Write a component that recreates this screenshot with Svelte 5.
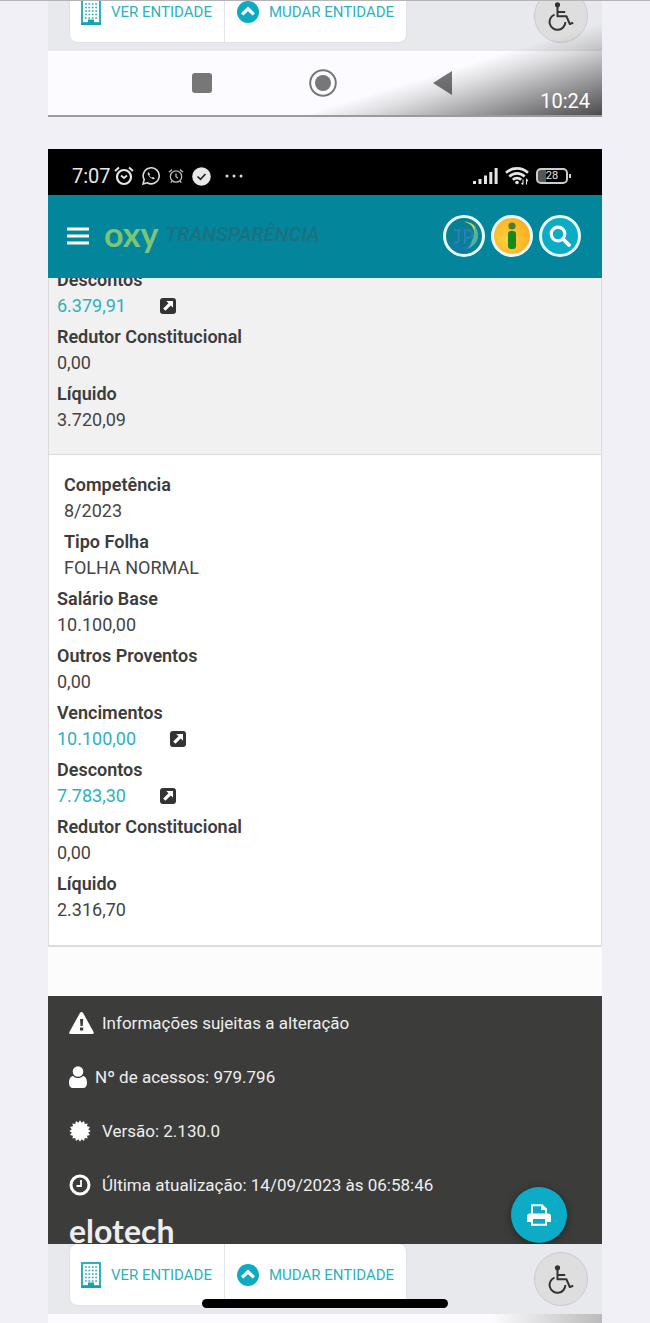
<script lang="ts">
  type Field = {
    label: string;
    value: string;
    link?: boolean;
    indent?: boolean;
  };

  const previous: Field[] = [
    { label: "Descontos", value: "6.379,91", link: true },
    { label: "Redutor Constitucional", value: "0,00" },
    { label: "Líquido", value: "3.720,09" },
  ];

  const current: Field[] = [
    { label: "Competência", value: "8/2023", indent: true },
    { label: "Tipo Folha", value: "FOLHA NORMAL", indent: true },
    { label: "Salário Base", value: "10.100,00" },
    { label: "Outros Proventos", value: "0,00" },
    { label: "Vencimentos", value: "10.100,00", link: true },
    { label: "Descontos", value: "7.783,30", link: true },
    { label: "Redutor Constitucional", value: "0,00" },
    { label: "Líquido", value: "2.316,70" },
  ];

  // jagged edge of the version badge
  const badge = Array.from({ length: 32 }, (_, i) => {
    const r = i % 2 ? 8.4 : 10.8;
    const a = (i * Math.PI) / 16;
    return `${(11 + r * Math.cos(a)).toFixed(1)},${(11 + r * Math.sin(a)).toFixed(1)}`;
  }).join(" ");
</script>

{#snippet fieldList(fields: Field[])}
  <dl class="fields">
    {#each fields as field}
      <div class="field" class:indent={field.indent}>
        <dt>{field.label}</dt>
        <dd>
          {#if field.link}
            <a href="#detalhe">
              {field.value}
              <svg width="16" height="16" viewBox="0 0 16 16" aria-hidden="true">
                <rect width="16" height="16" rx="3" fill="#333" />
                <path d="M6.2 3h6.8v6.8l-2.2-2.2-5.4 5.2-2.2-2.2 5.3-5.3z" fill="#fff" />
              </svg>
            </a>
          {:else}
            {field.value}
          {/if}
        </dd>
      </div>
    {/each}
  </dl>
{/snippet}

{#snippet entityBar()}
  <div class="entity-bar">
    <nav class="entity-links">
      <a class="see" href="#entidade">
        <svg width="20" height="26" viewBox="0 0 20 26" aria-hidden="true">
          <rect x="1" y="1" width="18" height="23" fill="none" stroke="#2fb0bd" stroke-width="2" />
          <path d="M4 5h13M4 8.5h13M4 12h13M4 15.5h13M4 19h13" stroke="#2fb0bd" stroke-width="1.7" stroke-dasharray="1.8 1.6" />
          <path d="M7 20.5h6V25H7zM0 24h20v2H0z" fill="#14a3b3" />
        </svg>
        VER ENTIDADE
      </a>
      <a class="change" href="#mudar">
        <svg width="22" height="22" viewBox="0 0 22 22" aria-hidden="true">
          <circle cx="11" cy="11" r="11" fill="#0cabc2" />
          <path d="M5.2 13.4L11 7.8l5.8 5.6" fill="none" stroke="#fff" stroke-width="3.4" />
        </svg>
        MUDAR ENTIDADE
      </a>
    </nav>
    <button class="access" type="button" aria-label="Acessibilidade">
      <svg width="28" height="29" viewBox="0 0 28 29" fill="none" stroke="#333" stroke-width="2" aria-hidden="true">
        <circle cx="10.5" cy="2.8" r="2.6" fill="#333" stroke="none" />
        <path d="M10.5 4v10.3h9l3.3 7.7 3.4-1.2M10.7 10h7.5" stroke-linejoin="round" />
        <path d="M7.5 12.6a7.9 7.9 0 1 0 10.9 7.5" />
      </svg>
    </button>
  </div>
{/snippet}

<main class="page">
  <section class="shot shot-top">
    {@render entityBar()}
    <div class="android-nav">
      <svg width="22" height="22" viewBox="0 0 22 22"><rect x="1" y="1" width="20" height="20" rx="3" fill="#777" /></svg>
      <svg width="28" height="28" viewBox="0 0 28 28">
        <circle cx="14" cy="14" r="12.8" fill="none" stroke="#777" stroke-width="2" />
        <circle cx="14" cy="14" r="8" fill="#777" />
      </svg>
      <svg width="20" height="24" viewBox="0 0 20 24"><path d="M19 0v24L0 12z" fill="#777" /></svg>
    </div>
    <div class="shade"><time>10:24</time></div>
  </section>

  <section class="shot shot-main">
    <div class="status-bar">
      <time>7:07</time>
      <svg width="20" height="20" viewBox="0 0 20 20" fill="none" stroke="#e6e6e6" aria-hidden="true">
        <circle cx="10" cy="11" r="7" stroke-width="2.2" />
        <path d="M1 5l4-3.5M19 5l-4-3.5" stroke-width="2" />
        <path d="M7 9.5l3 2.5 3-2.5" stroke-width="1.8" />
      </svg>
      <svg width="18" height="18" viewBox="0 0 18 18" fill="none" stroke="#ddd" aria-hidden="true">
        <path d="M1 17l1.2-4.3A8 8 0 1 1 5.3 15.8z" stroke-width="1.6" />
        <path d="M6.3 5c-1.2 1-.6 3 1.4 5s4 2.9 5.2 1.5L11 9.8l-1.1.9c-1.2-.5-2-1.3-2.6-2.5l.8-1z" fill="#ddd" stroke="none" />
      </svg>
      <svg width="16" height="16" viewBox="0 0 16 16" fill="none" stroke="#bbb" aria-hidden="true">
        <circle cx="8" cy="8.5" r="5.7" stroke-width="1.3" />
        <path d="M1 4.2L4 1.5M15 4.2L12 1.5M8 5.5v3.2l2 1.6M4 13l-1.3 1.7M12 13l1.3 1.7" stroke-width="1.3" />
      </svg>
      <svg width="19" height="19" viewBox="0 0 19 19" aria-hidden="true">
        <circle cx="9.5" cy="9.5" r="9.3" fill="#e8e8e8" />
        <path d="M5.5 9.5l3 2.8 5-5.3" fill="none" stroke="#222" stroke-width="1.7" />
      </svg>
      <svg class="dots" width="18" height="4" viewBox="0 0 18 4" fill="#ddd" aria-hidden="true">
        <circle cx="2" cy="2" r="1.5" /><circle cx="9" cy="2" r="1.5" /><circle cx="16" cy="2" r="1.5" />
      </svg>
      <div class="signals">
        <svg width="25" height="16" viewBox="0 0 25 16" fill="#e6e6e6" aria-hidden="true">
          <path d="M0 13h3v3H0zM5.5 11h3v5h-3zM11 7.5h3V16h-3zM16.3 4h3v12h-3zM21.6 0h3v16h-3z" />
        </svg>
        <svg width="24" height="18" viewBox="0 0 24 18" fill="none" stroke="#e6e6e6" stroke-width="2.6" aria-hidden="true">
          <path d="M1 5.8a16 16 0 0 1 22 0M4.3 9.5a11 11 0 0 1 15.4 0M7.8 12.8a6 6 0 0 1 8.4 0" />
          <circle cx="12" cy="15.5" r="1.8" fill="#e6e6e6" stroke="none" />
          <path d="M18 12.5v5M16.5 16l1.5 1.5M21.5 17.5v-5l1.4 1.5" stroke-width="1.1" />
        </svg>
        <div class="battery">28</div>
      </div>
    </div>

    <header class="app-header">
      <button class="menu" type="button" aria-label="Menu">
        <svg width="22" height="18" viewBox="0 0 22 18"><path d="M0 2h22M0 9h22M0 16h22" stroke="#fff" stroke-width="3" /></svg>
      </button>
      <a class="brand" href="#inicio"><b>oxy</b><i>TRANSPARÊNCIA</i></a>
      <div class="tools">
        <button class="round portal" type="button" aria-label="Portal">
          <svg width="36" height="36" viewBox="0 0 38 38" fill="none">
            <path d="M19 4c9 2 13 9 10 19 7-8 3-19-10-19z" fill="#c7d64b" />
            <path d="M30 8c8 10 3 22-9 25 6-6 10-14 9-25z" fill="#4fb3a0" />
            <path d="M6 23c3 8 13 10 21 3-4 10-18 12-21-3z" fill="#1577b8" />
            <path d="M8 13h8M13.5 13v10q0 4-5 3M20 27V13h3q5 0 5 4t-5 4h-3" stroke="#2a7fbd" stroke-width="2" />
          </svg>
        </button>
        <button class="round info" type="button" aria-label="Informação">
          <svg width="14" height="28" viewBox="0 0 14 28" fill="#128a1c">
            <circle cx="7" cy="4" r="3.6" fill="#487d35" />
            <rect x="3" y="9" width="8" height="18" rx="3" />
          </svg>
        </button>
        <button class="round search" type="button" aria-label="Pesquisar">
          <svg width="22" height="22" viewBox="0 0 22 22" fill="none" stroke="#fff">
            <circle cx="9" cy="9" r="6.8" stroke-width="3.2" />
            <path d="M14 14l6 6" stroke-width="3.8" stroke-linecap="round" />
          </svg>
        </button>
      </div>
    </header>

    <article class="record previous">{@render fieldList(previous)}</article>
    <article class="record current">{@render fieldList(current)}</article>

    <footer class="footer">
      <p>
        <svg width="25" height="22" viewBox="0 0 25 22" aria-hidden="true">
          <path d="M12.5 0q1 0 1.6 1l10.5 19q.7 2-1.2 2H1.6q-1.9 0-1.2-2L10.9 1q.6-1 1.6-1z" fill="#fff" />
          <path d="M11 7h3.2l-.5 7h-2.2zM11 15.5h3.2v3H11z" fill="#3c3c3b" />
        </svg>
        <span>Informações sujeitas a alteração</span>
      </p>
      <p>
        <svg width="18" height="22" viewBox="0 0 18 22" fill="#fff" aria-hidden="true">
          <path d="M4 10c1.5 1.5 3 2 5 2s3.5-.5 5-2c3 .7 4 3.5 4 7 0 3-1.5 5-4 5H4c-2.5 0-4-2-4-5 0-3.5 1-6.3 4-7z" />
          <circle cx="9" cy="5.5" r="5.3" />
        </svg>
        <span>Nº de acessos: 979.796</span>
      </p>
      <p class="wide">
        <svg width="22" height="22" viewBox="0 0 22 22" aria-hidden="true"><polygon points={badge} fill="#fff" /></svg>
        <span>Versão: 2.130.0</span>
      </p>
      <p class="wide">
        <svg width="22" height="22" viewBox="0 0 22 22" fill="none" stroke="#fff" aria-hidden="true">
          <circle cx="11" cy="11" r="9" stroke-width="3" />
          <path d="M12 6v6H7.5" stroke-width="1.8" />
        </svg>
        <span>Última atualização: 14/09/2023 às 06:58:46</span>
      </p>
      <div class="vendor">elotech</div>
      <button class="print" type="button" aria-label="Imprimir">
        <svg width="24" height="22" viewBox="0 0 24 22" aria-hidden="true">
          <path d="M5 11V1.2h10l4 4V11" fill="none" stroke="#fff" stroke-width="2" />
          <path d="M14 1v5h5z" fill="#fff" />
          <path d="M3 9.5h18q3 0 3 3V18h-4v-3H4v3H0v-5.5q0-3 3-3z" fill="#fff" />
          <path d="M5 15v5.8h14V15" fill="none" stroke="#fff" stroke-width="2" />
        </svg>
      </button>
    </footer>

    {@render entityBar()}
    <div class="nav-edge"></div>
  </section>
  <div class="home-indicator"></div>
</main>

<style>
  :global(body) {
    margin: 0;
    background: #f1f0f6;
  }

  .page {
    display: flex;
    flex-direction: column;
    gap: 32px;
    min-height: 100vh;
    padding: 0 48px;
    box-sizing: border-box;
    font-family: Roboto, "Liberation Sans", sans-serif;
    font-size: 18px;
    color: #444;
    border-top: 1px solid #b4b3b8;
  }

  svg {
    display: block;
    flex-shrink: 0;
  }

  button {
    display: flex;
    align-items: center;
    justify-content: center;
    padding: 0;
    border: none;
    background: none;
    cursor: pointer;
  }

  a {
    color: #2fb0bd;
    text-decoration: none;
  }

  .shot {
    position: relative;
    display: flex;
    flex-direction: column;
    overflow: hidden;
  }

  .shot-top {
    border-bottom: 2px solid #9b9b9d;
  }

  .shot-top .entity-bar {
    margin-top: -20px;
  }

  .shot-main {
    flex: 1;
  }

  .entity-bar {
    display: flex;
    align-items: flex-start;
    justify-content: space-between;
    height: 70px;
    padding: 0 14px 0 22px;
    box-sizing: border-box;
    background: #e8e9ec;
    flex-shrink: 0;
  }

  .entity-links {
    display: flex;
    height: 61px;
    border-radius: 7px;
    background: #fff;
    box-shadow: 0 0 2px #ccc;
  }

  .entity-links a {
    display: flex;
    align-items: center;
    gap: 10px;
    padding: 0 12px 0 11px;
    font-size: 15px;
    white-space: nowrap;
  }

  .entity-links .change {
    padding: 0 12px;
    border-left: 1px solid #e2e3e7;
  }

  .access {
    width: 54px;
    height: 54px;
    margin-top: 8px;
    border: 1px solid #ccc;
    border-radius: 50%;
    background: #dedede;
  }

  .android-nav {
    display: flex;
    align-items: center;
    justify-content: center;
    gap: 96px;
    height: 64px;
    padding-right: 7px;
    background: #fcfbff;
  }

  .shade {
    position: absolute;
    right: 0;
    bottom: 0;
    width: 300px;
    height: 100px;
    display: flex;
    align-items: flex-end;
    justify-content: flex-end;
    padding: 0 12px 4px 0;
    box-sizing: border-box;
    background: linear-gradient(163deg, transparent 52%, rgba(0, 0, 0, 0.12) 62%, rgba(0, 0, 0, 0.7));
    color: #fff;
    font-size: 20px;
    line-height: 20px;
  }

  .status-bar {
    display: flex;
    align-items: center;
    gap: 8px;
    height: 46px;
    padding: 8px 31px 0 24px;
    box-sizing: border-box;
    background: #000;
    color: #e6e6e6;
    font-size: 20px;
  }

  .status-bar time {
    margin-right: -5px;
  }

  .dots {
    margin-left: 6px;
  }

  .signals {
    display: flex;
    align-items: center;
    gap: 7px;
    margin-left: auto;
  }

  .battery {
    position: relative;
    width: 32px;
    height: 16px;
    margin-right: 3px;
    border: 2px solid #ccc;
    border-radius: 5px;
    box-sizing: border-box;
    background: linear-gradient(90deg, #555 28%, #000 28%);
    font-size: 11px;
    line-height: 12px;
    text-align: center;
  }

  .battery::after {
    content: "";
    position: absolute;
    top: 4px;
    right: -5px;
    width: 2px;
    height: 4px;
    background: #ccc;
  }

  .app-header {
    position: relative;
    z-index: 1;
    display: flex;
    align-items: center;
    gap: 15px;
    height: 83px;
    padding: 0 21px 2px 19px;
    box-sizing: border-box;
    background: #03869b;
  }

  .brand {
    display: flex;
    align-items: center;
    gap: 7px;
    height: 48px;
    line-height: 40px;
    padding-bottom: 4px;
    box-sizing: border-box;
  }

  .brand b {
    color: #7cc576;
    font-family: Lato, sans-serif;
    font-size: 34px;
  }

  .brand i {
    color: #1c7080;
    font-size: 20px;
    font-weight: 500;
  }

  .tools {
    display: flex;
    gap: 6px;
    margin-left: auto;
  }

  .round {
    width: 42px;
    height: 42px;
    border: 3px solid #e9fbff;
    border-radius: 50%;
  }

  .portal {
    background: #087f93;
  }

  .info {
    background: radial-gradient(circle at 35% 60%, #ffcf3a, #f8a51d);
  }

  .search {
    background: #0cabc6;
  }

  .record {
    border: 1px solid #dcdcdc;
    border-top: none;
    padding: 17px 8px 23px;
    background: #fff;
  }

  .previous {
    margin-top: -11px;
    padding-top: 0;
    padding-bottom: 22px;
    background: #f1f1f1;
  }

  .current {
    border-bottom-width: 2px;
  }

  .fields {
    display: flex;
    flex-direction: column;
    gap: 6px;
    margin: 0;
  }

  .indent {
    padding-left: 7px;
  }

  dt {
    font-weight: 600;
    line-height: 26px;
    color: #3c3c3b;
  }

  dd {
    margin: 0;
    line-height: 25px;
  }

  dd a {
    display: inline-flex;
    align-items: center;
    gap: 34px;
  }

  .footer {
    position: relative;
    height: 248px;
    margin-top: 49px;
    padding: 0 21px;
    box-sizing: border-box;
    overflow: hidden;
    background: #3c3c3b;
    color: #eee;
    box-shadow: 0 -49px 0 #fcfcfc;
  }

  .footer p {
    display: flex;
    align-items: center;
    gap: 8px;
    height: 54px;
    margin: 0;
    font-size: 17px;
  }

  .footer .wide {
    gap: 11px;
  }

  .vendor {
    font-family: Lato, sans-serif;
    font-size: 32px;
    font-weight: 700;
    line-height: 38px;
  }

  .print {
    position: absolute;
    right: 35px;
    bottom: 1px;
    width: 56px;
    height: 56px;
    border-radius: 50%;
    background: #0cabc6;
    box-shadow: 0 2px 8px rgba(0, 0, 0, 0.4);
  }

  .nav-edge {
    flex: 1;
    min-height: 8px;
    background: linear-gradient(90deg, #fcfbff 80%, #bbb);
  }

  .home-indicator {
    position: fixed;
    left: 50%;
    bottom: 15px;
    width: 246px;
    height: 9px;
    margin-left: -123px;
    border-radius: 5px;
    background: #000;
  }
</style>
